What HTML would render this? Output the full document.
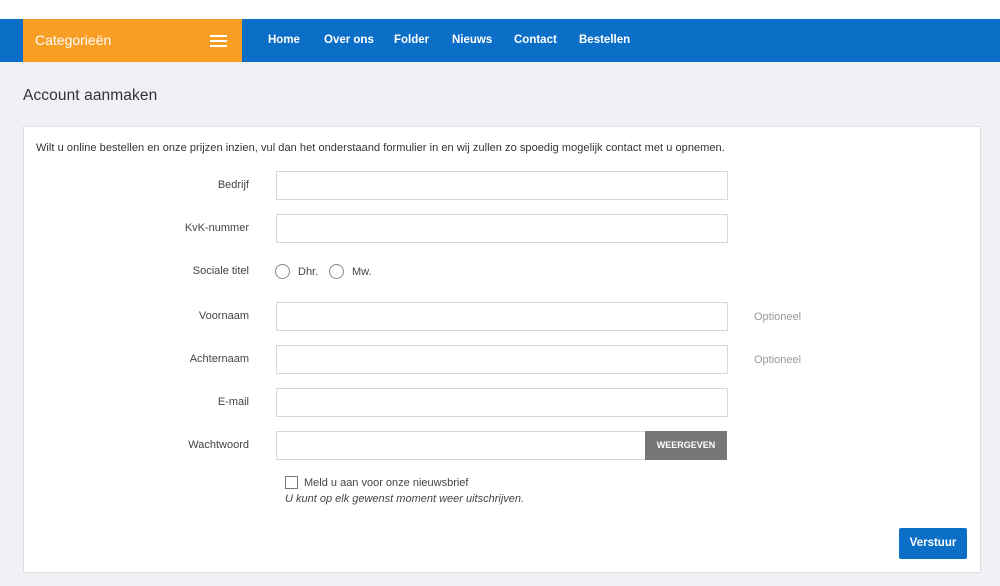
<!DOCTYPE html>
<html><head><style>
*{box-sizing:border-box;margin:0;padding:0}
body{width:1000px;height:586px;background:#eff1f5;font-family:"Liberation Sans",sans-serif;position:relative;overflow:hidden;color:#333}
.top{position:absolute;left:0;top:0;width:1000px;height:19px;background:#fff}
.nav{position:absolute;left:0;top:19px;width:1000px;height:43px;background:#0b6fc8}
.cat{position:absolute;left:23px;top:0;width:219px;height:43px;background:#f89e25;color:#fff;font-size:14px;line-height:43px;padding-left:12px}
.ham{position:absolute;left:187px;top:16px;width:17px}
.ham i{display:block;height:2px;background:#fff;margin-bottom:3px}
.nav a{position:absolute;top:0;line-height:43px;color:#fff;font-size:11.5px;font-weight:bold;text-decoration:none}
h1{position:absolute;left:23px;top:87px;font-size:15.5px;font-weight:normal;color:#333;letter-spacing:0.1px}
.card{position:absolute;left:23px;top:126px;width:958px;height:447px;background:#fff;border:1px solid #dde0e4}
.intro{position:absolute;left:36px;top:142px;font-size:11px;color:#333;letter-spacing:0.05px}
.lbl{position:absolute;width:249px;text-align:right;font-size:11px;color:#444;left:0}
.in{position:absolute;left:276px;width:452px;height:29px;border:1px solid #d8d8d8;background:#fff}
.opt{position:absolute;left:754px;font-size:11px;color:#999}
.rad{position:absolute;width:15px;height:15px;border:1px solid #888;border-radius:50%;top:264px}
.rt{position:absolute;top:266px;font-size:11px;color:#444}
.btn{position:absolute;left:645px;top:431px;width:82px;height:29px;background:#777;color:#fff;font-size:9px;font-weight:bold;text-align:center;line-height:29px}
.cb{position:absolute;left:285px;top:476px;width:13px;height:13px;border:1px solid #777}
.send{position:absolute;left:899px;top:528px;width:68px;height:31px;background:#0b6fc8;color:#fff;font-size:11.5px;font-weight:bold;text-align:center;line-height:31px;border-radius:2px}
</style></head><body>
<div class="top"></div>
<div class="nav">
<div class="cat">Categorieën<div class="ham"><i></i><i></i><i></i></div></div>
<a style="left:268px">Home</a><a style="left:324px">Over ons</a><a style="left:394px">Folder</a><a style="left:452px">Nieuws</a><a style="left:514px">Contact</a><a style="left:579px">Bestellen</a>
</div>
<h1>Account aanmaken</h1>
<div class="card"></div>
<div class="intro">Wilt u online bestellen en onze prijzen inzien, vul dan het onderstaand formulier in en wij zullen zo spoedig mogelijk contact met u opnemen.</div>
<div class="lbl" style="top:179px">Bedrijf</div><div class="in" style="top:171px"></div>
<div class="lbl" style="top:222px">KvK-nummer</div><div class="in" style="top:214px"></div>
<div class="lbl" style="top:265px">Sociale titel</div>
<div class="rad" style="left:275px"></div><div class="rt" style="left:298px">Dhr.</div>
<div class="rad" style="left:329px"></div><div class="rt" style="left:352px">Mw.</div>
<div class="lbl" style="top:310px">Voornaam</div><div class="in" style="top:302px"></div><div class="opt" style="top:311px">Optioneel</div>
<div class="lbl" style="top:353px">Achternaam</div><div class="in" style="top:345px"></div><div class="opt" style="top:354px">Optioneel</div>
<div class="lbl" style="top:396px">E-mail</div><div class="in" style="top:388px"></div>
<div class="lbl" style="top:439px">Wachtwoord</div><div class="in" style="top:431px;width:370px"></div><div class="btn">WEERGEVEN</div>
<div class="cb"></div><div style="position:absolute;left:304px;top:477px;font-size:11px;color:#444">Meld u aan voor onze nieuwsbrief</div>
<div style="position:absolute;left:285px;top:493px;font-size:11px;font-style:italic;color:#444">U kunt op elk gewenst moment weer uitschrijven.</div>
<div class="send">Verstuur</div>
</body></html>
